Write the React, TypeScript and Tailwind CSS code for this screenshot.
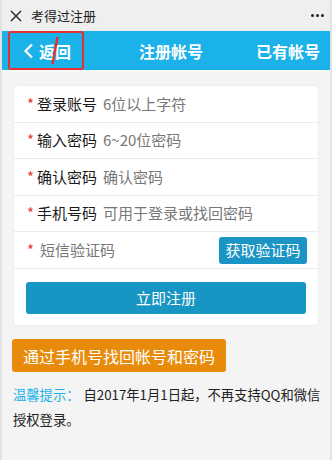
import React from 'react';

const FONT = { fontFamily: '"Noto Sans CJK SC", "Noto Sans", sans-serif' };

function Field({ label, hint }: { label: string; hint: string }) {
  return (
    <div className="flex h-[36.5px] items-center border-b border-[#ececec] pl-[13px]">
      <span className="mr-[3px] text-[15px] text-[#e53935]">*</span>
      <span className="text-[15px] text-[#1a1a1a]">{label}</span>
      <span className="ml-[6px] text-[15px] text-[#777]">{hint}</span>
    </div>
  );
}

export default function App() {
  return (
    <div
      className="flex h-[460px] w-[332px] flex-col overflow-hidden border-l-2 border-r-2 border-[#e2e2e2] bg-[#f4f4f4]"
      style={FONT}
    >
      {/* title bar */}
      <div className="flex h-[31px] items-center bg-[#efefef] pl-[8px] pr-[6px]">
        <svg width="12" height="12" viewBox="0 0 12 12" className="mr-[9px]">
          <path d="M1 1 L11 11 M11 1 L1 11" stroke="#222" strokeWidth="1.4" />
        </svg>
        <span className="text-[13px] text-[#222]">考得过注册</span>
        <div className="ml-auto flex gap-[2px]">
          <span className="h-[3px] w-[3px] rounded-full bg-[#222]" />
          <span className="h-[3px] w-[3px] rounded-full bg-[#222]" />
          <span className="h-[3px] w-[3px] rounded-full bg-[#222]" />
        </div>
      </div>

      {/* blue header */}
      <div className="flex h-[39px] items-center bg-[#1bb1e9] text-white">
        <div className="relative ml-[6px] flex h-[39px] w-[76px] items-center rounded-[3px] border-2 border-[#e63030] pl-[13px]">
          <svg width="11" height="16" viewBox="0 0 11 16" className="mr-[5px]">
            <path d="M9 1.5 L2.5 8 L9 14.5" stroke="#fff" strokeWidth="2.2" fill="none" />
          </svg>
          <span className="text-[16px] font-bold">返回</span>
          <svg width="10" height="30" viewBox="0 0 10 30" className="absolute left-[40px] top-[3px]">
            <path d="M7.5 1 L2.5 28" stroke="#e63030" strokeWidth="2.4" />
          </svg>
        </div>
        <span className="ml-[55px] text-[16px] font-bold">注册帐号</span>
        <span className="ml-auto mr-[10px] text-[16px] font-bold">已有帐号</span>
      </div>
      <div className="h-[2px] bg-[#f9f9f9]" />

      {/* form card */}
      <div className="mx-[11px] mt-[13px] rounded-[4px] border border-[#ececec] bg-white">
        <Field label="登录账号" hint="6位以上字符" />
        <Field label="输入密码" hint="6~20位密码" />
        <Field label="确认密码" hint="确认密码" />
        <Field label="手机号码" hint="可用于登录或找回密码" />
        <div className="flex h-[37px] items-center border-b border-[#ececec] pl-[13px] pr-[11px]">
          <span className="mr-[6px] text-[15px] text-[#e53935]">*</span>
          <span className="text-[15px] text-[#777]">短信验证码</span>
          <button className="ml-auto h-[27px] w-[88px] rounded-[3px] bg-[#1a94c4] text-[15px] text-white">
            获取验证码
          </button>
        </div>
        <div className="px-[12px] pb-[11px] pt-[13px]">
          <button className="h-[32px] w-full rounded-[3px] bg-[#1795c3] text-[15px] text-white">
            立即注册
          </button>
        </div>
      </div>

      {/* recover */}
      <div className="mt-[13px] pl-[10px]">
        <button className="h-[33px] w-[214px] rounded-[3px] bg-[#e88b0a] text-[16px] text-white">
          通过手机号找回帐号和密码
        </button>
      </div>

      <p className="mt-[10px] whitespace-nowrap pl-[11px] text-[13.3px] leading-[25px] text-[#222]">
        <span className="text-[#1bb1e9]">温馨提示：</span>
        <span className="ml-[4px]">自2017年1月1日起，不再支持QQ和微信</span>
        <br />
        授权登录。
      </p>
    </div>
  );
}
